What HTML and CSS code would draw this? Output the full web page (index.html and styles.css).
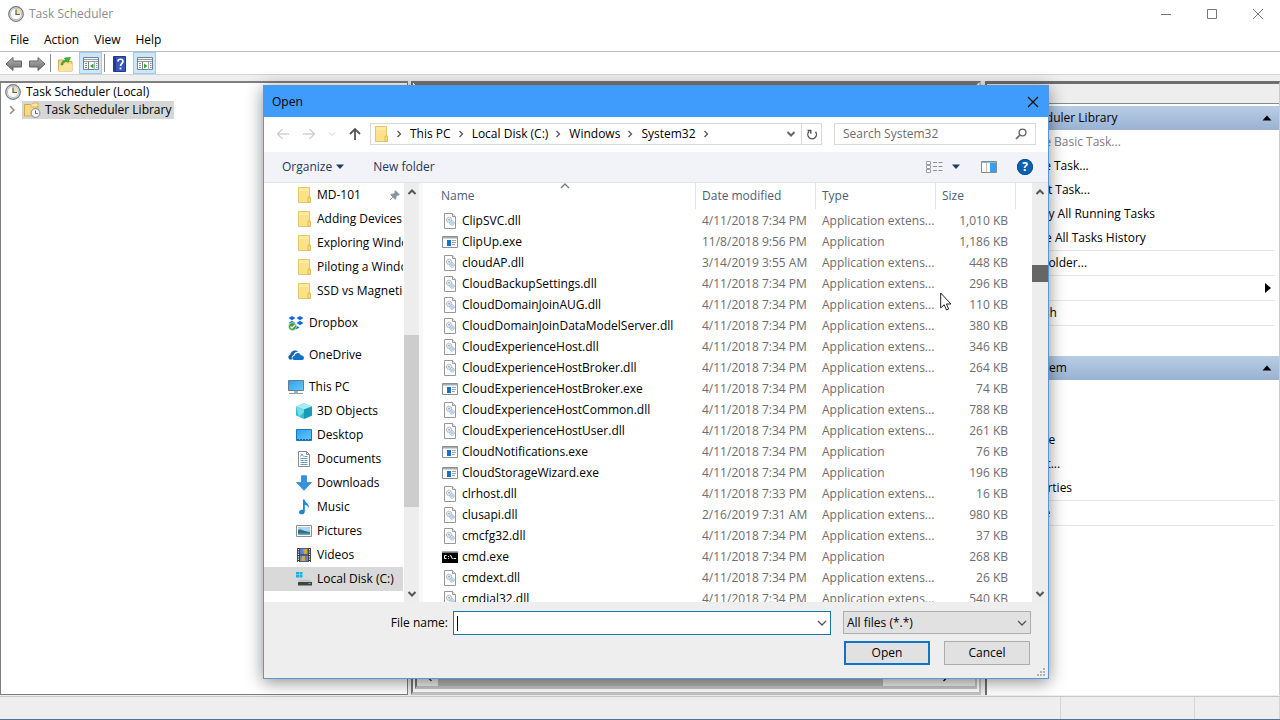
FILE: index.html
```html
<!DOCTYPE html>
<html lang="en">
<head>
<meta charset="utf-8">
<title>Task Scheduler</title>
<link rel="stylesheet" href="styles.css">
</head>
<body>
<svg class="defs" aria-hidden="true">
  <defs>
    <linearGradient id="g-blue" x1="0" y1="0" x2="1" y2="1"><stop offset="0" stop-color="#27a2ef"/><stop offset="1" stop-color="#6cc6f8"/></linearGradient>
    <linearGradient id="g-arrow" x1="0" y1="0" x2="0" y2="1"><stop offset="0" stop-color="#b4b4b4"/><stop offset="1" stop-color="#6c6c6c"/></linearGradient>
  </defs>
  <symbol id="clock" viewBox="0 0 16 16"><circle cx="8" cy="8" r="7.3" fill="#dfe5ec" stroke="#74787e" stroke-width="1.2"/><circle cx="8" cy="8" r="5.6" fill="#fbfbf4" stroke="#a9b4c0" stroke-width=".8"/><path d="M8 8V2.8A5.2 5.2 0 0 1 13.2 8z" fill="#f3dfa0"/><path d="M8 3.5V8.5H12" fill="none" stroke="#555d68" stroke-width="1.2"/></symbol>
  <symbol id="folder" viewBox="0 0 16 16"><path d="M2.500.5h11v15h-11z" fill="#fde28b" stroke="#e5c566"/><path d="M3 1h10v3H3z" fill="#ffea9f"/><path d="M12 15.500V10h2.500v5.500z" fill="#f9dc7c" stroke="#d9b347" stroke-width=".8"/></symbol>
  <symbol id="taskfolder" viewBox="0 0 18 16"><path d="M1.500 14V2.500h6l1.500 2h6V14z" fill="#f5d982" stroke="#d2a94a"/><path d="M9 2.500l1-1.500h5v4H8" fill="#f9e7ab" stroke="#d2a94a" stroke-width=".8"/><circle cx="12.500" cy="11" r="4.400" fill="#f4f7fa" stroke="#7c8793"/><path d="M12.500 8.500V11.500h2.300" fill="none" stroke="#56616d"/></symbol>
  <symbol id="larrow" viewBox="0 0 18 16"><path d="M1 8l7-6.500V5h8.500v6H8v3.500z" fill="url(#g-arrow)" stroke="#646464"/></symbol>
  <symbol id="upfolder" viewBox="0 0 16 16"><path d="M1.500 15V4h5l1 1.500H15V15z" fill="#f5d980" stroke="#d3ac50"/><path d="M1.500 15l1-7H15v7z" fill="#fbe59b"/><path d="M4 9c.5-3 2-4.500 4.500-4.700L7.500 2l6-.5-2.500 5-1-1.200C7.500 5.500 6 7 5.800 9z" fill="#41b336" stroke="#268a22" stroke-width=".6"/></symbol>
  <symbol id="panel" viewBox="0 0 16 14"><path d="M.5.5h15v12H.5z" fill="#fff" stroke="#74808c"/><path d="M1 2.500h14M1 4.500h14" stroke="#8d98a3" stroke-width="1"/><path d="M5.500 5v8" stroke="#74808c"/><path d="M2 6.500h2M2 8.500h2M2 10.500h2M13 6.500h1.500M13 8.500h1.500M13 10.500h1.500" stroke="#7e8b98"/><path d="M11.500 5v8" stroke="#a5afb8"/></symbol>
  <symbol id="book" viewBox="0 0 13 16"><path d="M.5.5h12v15H.5z" fill="#3756bb" stroke="#223a86"/><path d="M1 1h2v14H1z" fill="#223c96"/><path d="M5 5.500c0-3 5-3 5 0 0 2-2.500 2-2.500 4.500M7.500 11.500v2" fill="none" stroke="#fff" stroke-width="1.700"/></symbol>
  <symbol id="dll" viewBox="0 0 16 16"><path d="M2.500.5h8l3 3v12h-11z" fill="#fff" stroke="#979797"/><path d="M10.500.5v3h3" fill="#eee" stroke="#979797"/><circle cx="7" cy="6.800" r="2.600" fill="#e4eaf0" stroke="#8b98a6" stroke-dasharray="1 .6"/><circle cx="7" cy="6.800" r=".8" fill="#8293a4"/><circle cx="10" cy="10" r="2.200" fill="#d8ecf8" stroke="#83a8c4" stroke-dasharray="1 .6"/><circle cx="10" cy="10" r=".7" fill="#7ca4c2"/></symbol>
  <symbol id="exe" viewBox="0 0 16 16"><path d="M.5 2.500h15v11H.5z" fill="#fff" stroke="#8a8f94"/><path d="M1 3h14v1.500H1z" fill="#a8abad"/><path d="M5 6h4v6H5z" fill="#1671c8"/><path d="M10 6.500h4M10 8.500h4M10 10.500h3" stroke="#a0a0a0"/></symbol>
  <symbol id="cmd" viewBox="0 0 16 16"><path d="M0 2h16v12H0z" fill="#000"/><path d="M0 2h16v1.700H0z" fill="#a9adb0"/><path d="M4.500 6.500H2.500v3h2M6.500 7v.8M6.500 9v.8M8.500 6l2 4M11.500 9.500h2.500" stroke="#fff" fill="none"/></symbol>
  <symbol id="dropbox" viewBox="0 0 16 16"><path d="M4 1l3.500 2L4 5.200.5 3zM12 1l3.500 2L12 5.200 8.500 3zM4 5.800L7.500 8 4 10.200.5 8zM12 5.800L15.500 8 12 10.200 8.500 8zM8 10.500l3.500 2-3.500 2-3.500-2z" fill="#1467df"/><circle cx="4.500" cy="11.500" r="4" fill="#3f9f3c" stroke="#e8f5e6" stroke-width=".7"/><path d="M2.500 11.500l1.500 1.500 3-3" fill="none" stroke="#fff" stroke-width="1.300"/></symbol>
  <symbol id="onedrive" viewBox="0 0 16 16"><path d="M1.500 12.500C-.3 11-.1 8.300 2.300 7.900 2.500 4 7.500 1.800 10.300 4.800 7.300 4.500 6 6.200 5.700 8 3.600 8.500 3.300 11 4.300 12.500z" fill="#0a64b8"/><path d="M6 13c-2.500-.5-2-3.700.5-4C7 5.300 12 5 12.700 8.300 16.500 8 17 12.800 14 13z" fill="#0f72cb"/></symbol>
  <symbol id="pc" viewBox="0 0 16 16"><path d="M.5 1.500h15v10H.5z" fill="url(#g-blue)" stroke="#6c7b86"/><path d="M6 12h4v2H6z" fill="#a7b5bf"/><path d="M1 14.500h14" stroke="#7fa1b7"/></symbol>
  <symbol id="cube" viewBox="0 0 16 16"><path d="M0 3.500L8 .2l8 3.300v9L8 16l-8-3.500z" fill="#37bdd2"/><path d="M0 3.500L8 .2l8 3.300-8 3z" fill="#a9ebf1"/><path d="M8 6.500l8-3v9L8 16z" fill="#159db8"/><path d="M0 3.500l8 3V9L3 14z" fill="#78dbe6"/></symbol>
  <symbol id="desktop" viewBox="0 0 16 16"><path d="M.5 2.500h15v11H.5z" fill="url(#g-blue)" stroke="#1b76bd"/><path d="M1 12.500h14" stroke="#1263a3" stroke-dasharray="2 1"/></symbol>
  <symbol id="docs" viewBox="0 0 16 16"><path d="M2.500.5h8l3 3v12h-11z" fill="#fff" stroke="#8c8c8c"/><path d="M10.500.5v3h3" fill="none" stroke="#8c8c8c"/><path d="M4.500 5.500L6 3l1.500 2.500M8.500 5.500h3M4.500 7.500h7M4.500 9.500h3M8.500 9.500h3M4.500 11.500h7M4.500 13.500h7" fill="none" stroke="#5f9cc4"/></symbol>
  <symbol id="down" viewBox="0 0 16 16"><path d="M5.500.7h5V7.500h5L8 15.300.500 7.500h5z" fill="#3291e0" stroke="#2b7cc2" stroke-width=".7"/></symbol>
  <symbol id="music" viewBox="0 0 16 16"><path d="M7 .5h1.500c.5 3.500 5.500 4 4 8.800C12 7 10.500 6 8.800 5.700V12.500c0 3.500-5.800 3.800-5.800.8 0-2.200 2.300-3 4-2.500z" fill="#168bd8"/></symbol>
  <symbol id="pics" viewBox="0 0 16 16"><path d="M.5 2.500h15v11H.5z" fill="#fff" stroke="#8e8e8e"/><path d="M2 4h12v8H2z" fill="#a6d7f4"/><path d="M2 7c3-1.500 5 1.500 12 2v3H2z" fill="#386f83"/><path d="M2 10.500h12V12H2z" fill="#5fa8cb"/></symbol>
  <symbol id="video" viewBox="0 0 16 16"><path d="M1 1h14v14H1z" fill="#3d3d3d"/><path d="M4 1.500h8v6H4z" fill="#4f82d4"/><path d="M4 8.500h8v6H4z" fill="#5785ca"/><path d="M7 2h4v5H8zM6 9h3v5H5z" fill="#d6a43e"/><path d="M2.500 2v13M13.500 2v13" stroke="#fff" stroke-width="1.200" stroke-dasharray="1.200 1.200"/></symbol>
  <symbol id="disk" viewBox="0 0 16 16"><path d="M0 1h3v2.500H0zM3.500 1h3v2.500h-3zM0 4h3v2.500H0zM3.500 4h3v2.500h-3z" fill="#16b0e8"/><path d="M3 8.500h11l1.500 2.500h-13z" fill="#c3c6c8"/><path d="M2 11h14v3.500H2z" fill="#3e4346"/><path d="M12.500 12.500h2" stroke="#3bdc57"/></symbol>
  <symbol id="pin" viewBox="0 0 12 12"><path d="M7 .8L11.200 5l-1 .6-.8-.2L7.500 7.300l.1 2-.9.8L1.900 5.300l.8-.9 2 .1 1.900-1.900-.2-.8zM4.200 7.800L1 11" fill="#8795a3" stroke="#8795a3"/></symbol>
  <symbol id="chev-r" viewBox="0 0 8 8"><path d="M2.500 1L5.500 4l-3 3" fill="none" stroke="currentColor" stroke-width="1.300"/></symbol>
  <symbol id="chev-d" viewBox="0 0 10 8"><path d="M1 2l4 4 4-4" fill="none" stroke="currentColor" stroke-width="1.300"/></symbol>
  <symbol id="chev-u" viewBox="0 0 10 8"><path d="M1 6l4-4 4 4" fill="none" stroke="currentColor" stroke-width="1.300"/></symbol>
  <symbol id="bar-d" viewBox="0 0 10 8"><path d="M1.500 2L5 5.500 8.500 2" fill="none" stroke="currentColor" stroke-width="2"/></symbol>
  <symbol id="bar-u" viewBox="0 0 10 8"><path d="M1.500 6L5 2.500 8.500 6" fill="none" stroke="currentColor" stroke-width="2"/></symbol>
  <symbol id="tri-u" viewBox="0 0 10 6"><path d="M5 .5L9.500 5.500h-9z" fill="#000"/></symbol>
  <symbol id="tri-d" viewBox="0 0 10 6"><path d="M1 .5h8L5 5z" fill="#1d3b5e"/></symbol>
  <symbol id="nav-l" viewBox="0 0 14 12"><path d="M6.500 1L1.500 6l5 5M1.500 6h11.500" fill="none" stroke="currentColor" stroke-width="1.300"/></symbol>
</svg>

<header class="titlebar">
  <svg class="i16"><use href="#clock"/></svg>
  <h1>Task Scheduler</h1>
  <button aria-label="Minimize"><svg width="12" height="12"><path d="M1 6.500h10" stroke="#777"/></svg></button>
  <button aria-label="Maximize"><svg width="12" height="12"><path d="M1.500 1.500h9v9h-9z" fill="none" stroke="#777"/></svg></button>
  <button aria-label="Close"><svg width="12" height="12"><path d="M1 1l10 10M11 1L1 11" stroke="#777"/></svg></button>
</header>
<nav class="menubar"><button>File</button><button>Action</button><button>View</button><button>Help</button></nav>
<div class="toolbar">
  <button aria-label="Back"><svg width="18" height="16"><use href="#larrow"/></svg></button>
  <button aria-label="Forward"><svg class="flip" width="18" height="16"><use href="#larrow"/></svg></button>
  <i class="sep"></i>
  <button class="wide" aria-label="Up one level"><svg class="i16"><use href="#upfolder"/></svg></button>
  <button class="on" aria-label="Show console tree"><svg width="16" height="14"><use href="#panel"/><path d="M10.500 6.500v5l-3.500-2.500z" fill="#35a635"/></svg></button>
  <i class="sep"></i>
  <button class="wide" aria-label="Help"><svg width="13" height="16"><use href="#book"/></svg></button>
  <button class="on" aria-label="Show action pane"><svg width="16" height="14"><use href="#panel"/><path d="M7 6.500v5l3.500-2.500z" fill="#35a635"/></svg></button>
</div>

<main class="panes">
  <section class="tree">
    <div class="node"><svg class="i16"><use href="#clock"/></svg><span>Task Scheduler (Local)</span></div>
    <div class="node child"><svg class="expand" width="10" height="10"><use href="#chev-r"/></svg><span class="picked"><svg width="18" height="16"><use href="#taskfolder"/></svg>Task Scheduler Library</span></div>
  </section>
  <section class="center">
    <div class="hscroll"><svg width="8" height="8"><path d="M5.500 1l-3 3 3 3" fill="none" stroke="#444" stroke-width="1.500"/></svg><i></i><svg width="8" height="8"><use href="#chev-r"/></svg></div>
  </section>
  <aside class="actions">
    <h2>Actions</h2>
    <h3>Task Scheduler Library<svg width="10" height="6"><use href="#tri-u"/></svg></h3>
    <ul>
      <li class="dim">Create Basic Task...</li><li>Create Task...</li><li>Import Task...</li><li>Display All Running Tasks</li><li class="last">Enable All Tasks History</li>
      <li class="last">New Folder...</li><li class="last">View<svg width="6" height="10"><path d="M0 0l6 5-6 5z"/></svg></li><li class="last">Refresh</li><li>Help</li>
    </ul>
    <h3>Selected Item<svg width="10" height="6"><use href="#tri-u"/></svg></h3>
    <ul>
      <li>Run</li><li>End</li><li>Disable</li><li>Export...</li><li class="last">Properties</li><li class="last">Delete</li><li>Help</li>
    </ul>
  </aside>
</main>
<footer class="status"><i></i><i></i><i></i></footer>

<div class="dialog" role="dialog" aria-label="Open">
  <header class="dlg-title"><h2>Open</h2><button aria-label="Close dialog"><svg width="12" height="12"><path d="M1 1l10 10M11 1L1 11" stroke="#111" stroke-width="1.200"/></svg></button></header>
  <div class="dlg-nav">
    <div class="history">
      <button aria-label="Back" class="off"><svg width="14" height="12"><use href="#nav-l"/></svg></button>
      <button aria-label="Forward" class="off"><svg class="flip" width="14" height="12"><use href="#nav-l"/></svg></button>
      <button aria-label="Recent locations" class="off"><svg width="8" height="6"><use href="#chev-d"/></svg></button>
      <button aria-label="Up"><svg width="14" height="14"><path d="M7 13V2M2 7l5-5 5 5" fill="none" stroke="#555" stroke-width="1.800"/></svg></button>
    </div>
    <div class="address">
      <svg class="i16"><use href="#folder"/></svg>
      <svg class="crumb"><use href="#chev-r"/></svg><a href="#">This PC</a>
      <svg class="crumb"><use href="#chev-r"/></svg><a href="#">Local Disk (C:)</a>
      <svg class="crumb"><use href="#chev-r"/></svg><a href="#">Windows</a>
      <svg class="crumb"><use href="#chev-r"/></svg><a href="#">System32</a>
      <svg class="crumb"><use href="#chev-r"/></svg>
      <button class="drop" aria-label="Previous locations"><svg width="10" height="8"><use href="#bar-d"/></svg></button>
      <button class="refresh" aria-label="Refresh"><svg width="12" height="12"><path d="M3 3.500A4.300 4.300 0 1 0 9.500 3.800M1.500 2.500h3.300v3.300" fill="none" stroke="#555" stroke-width="1.400"/></svg></button>
    </div>
    <div class="search"><input type="search" placeholder="Search System32" aria-label="Search System32"><svg width="12" height="12"><circle cx="7.500" cy="4.500" r="3.400" fill="none" stroke="#666" stroke-width="1.400"/><path d="M5 7L1 11" stroke="#666" stroke-width="1.700"/></svg></div>
  </div>
  <div class="dlg-tools">
    <button>Organize<svg width="10" height="6"><use href="#tri-d"/></svg></button>
    <button class="new">New folder</button>
    <span class="grow"></span>
    <button aria-label="Change view"><svg width="17" height="14"><path d="M.5 1.500h4v3h-4zM.5 5.500h4v3h-4zM.5 9.500h4v3h-4z" fill="#fff" stroke="#9aa0a6"/><path d="M7 2.500h4M12.500 2.500h4M7 6.500h4M12.500 6.500h4M7 10.500h4M12.500 10.500h4" stroke="#8a9097"/></svg></button>
    <button class="more" aria-label="More view options"><svg width="10" height="6"><use href="#tri-d"/></svg></button>
    <button aria-label="Preview pane"><svg width="16" height="12"><path d="M.5.5h15v11H.5z" fill="#fff" stroke="#7f8d98"/><path d="M1 1.500h14" stroke="#a7b0b8"/><path d="M9 2h6v9H9z" fill="#3a9ded"/><path d="M5.500 2v9" stroke="#b9c0c6"/></svg></button>
    <button class="q" aria-label="Get help">?</button>
  </div>
  <div class="dlg-body">
    <nav class="places">
      <ul class="list">
        <li class="sub"><svg class="i16"><use href="#folder"/></svg><span>MD-101</span><svg class="pin"><use href="#pin"/></svg></li>
        <li class="sub"><svg class="i16"><use href="#folder"/></svg><span>Adding Devices to</span></li>
        <li class="sub"><svg class="i16"><use href="#folder"/></svg><span>Exploring Windows</span></li>
        <li class="sub"><svg class="i16"><use href="#folder"/></svg><span>Piloting a Windows</span></li>
        <li class="sub"><svg class="i16"><use href="#folder"/></svg><span>SSD vs Magnetic</span></li>
        <li class="top"><svg class="i16"><use href="#dropbox"/></svg><span>Dropbox</span></li>
        <li class="top"><svg class="i16"><use href="#onedrive"/></svg><span>OneDrive</span></li>
        <li class="top"><svg class="i16"><use href="#pc"/></svg><span>This PC</span></li>
        <li class="sub"><svg class="i16"><use href="#cube"/></svg><span>3D Objects</span></li>
        <li class="sub"><svg class="i16"><use href="#desktop"/></svg><span>Desktop</span></li>
        <li class="sub"><svg class="i16"><use href="#docs"/></svg><span>Documents</span></li>
        <li class="sub"><svg class="i16"><use href="#down"/></svg><span>Downloads</span></li>
        <li class="sub"><svg class="i16"><use href="#music"/></svg><span>Music</span></li>
        <li class="sub"><svg class="i16"><use href="#pics"/></svg><span>Pictures</span></li>
        <li class="sub"><svg class="i16"><use href="#video"/></svg><span>Videos</span></li>
        <li class="sub current"><svg class="i16"><use href="#disk"/></svg><span>Local Disk (C:)</span></li>
      </ul>
      <div class="vscroll"><svg><use href="#bar-u"/></svg><div class="track near"><i></i></div><svg><use href="#bar-d"/></svg></div>
    </nav>
    <div class="files">
      <table>
        <thead><tr><th>Name<svg class="sort" width="10" height="8"><use href="#chev-u"/></svg></th><th>Date modified</th><th>Type</th><th>Size</th></tr></thead>
        <tbody>
          <tr><td><svg class="i16"><use href="#dll"/></svg>ClipSVC.dll</td><td>4/11/2018 7:34 PM</td><td>Application extens...</td><td>1,010 KB</td></tr>
          <tr><td><svg class="i16"><use href="#exe"/></svg>ClipUp.exe</td><td>11/8/2018 9:56 PM</td><td>Application</td><td>1,186 KB</td></tr>
          <tr><td><svg class="i16"><use href="#dll"/></svg>cloudAP.dll</td><td>3/14/2019 3:55 AM</td><td>Application extens...</td><td>448 KB</td></tr>
          <tr><td><svg class="i16"><use href="#dll"/></svg>CloudBackupSettings.dll</td><td>4/11/2018 7:34 PM</td><td>Application extens...</td><td>296 KB</td></tr>
          <tr><td><svg class="i16"><use href="#dll"/></svg>CloudDomainJoinAUG.dll</td><td>4/11/2018 7:34 PM</td><td>Application extens...</td><td>110 KB</td></tr>
          <tr><td><svg class="i16"><use href="#dll"/></svg>CloudDomainJoinDataModelServer.dll</td><td>4/11/2018 7:34 PM</td><td>Application extens...</td><td>380 KB</td></tr>
          <tr><td><svg class="i16"><use href="#dll"/></svg>CloudExperienceHost.dll</td><td>4/11/2018 7:34 PM</td><td>Application extens...</td><td>346 KB</td></tr>
          <tr><td><svg class="i16"><use href="#dll"/></svg>CloudExperienceHostBroker.dll</td><td>4/11/2018 7:34 PM</td><td>Application extens...</td><td>264 KB</td></tr>
          <tr><td><svg class="i16"><use href="#exe"/></svg>CloudExperienceHostBroker.exe</td><td>4/11/2018 7:34 PM</td><td>Application</td><td>74 KB</td></tr>
          <tr><td><svg class="i16"><use href="#dll"/></svg>CloudExperienceHostCommon.dll</td><td>4/11/2018 7:34 PM</td><td>Application extens...</td><td>788 KB</td></tr>
          <tr><td><svg class="i16"><use href="#dll"/></svg>CloudExperienceHostUser.dll</td><td>4/11/2018 7:34 PM</td><td>Application extens...</td><td>261 KB</td></tr>
          <tr><td><svg class="i16"><use href="#exe"/></svg>CloudNotifications.exe</td><td>4/11/2018 7:34 PM</td><td>Application</td><td>76 KB</td></tr>
          <tr><td><svg class="i16"><use href="#exe"/></svg>CloudStorageWizard.exe</td><td>4/11/2018 7:34 PM</td><td>Application</td><td>196 KB</td></tr>
          <tr><td><svg class="i16"><use href="#dll"/></svg>clrhost.dll</td><td>4/11/2018 7:33 PM</td><td>Application extens...</td><td>16 KB</td></tr>
          <tr><td><svg class="i16"><use href="#dll"/></svg>clusapi.dll</td><td>2/16/2019 7:31 AM</td><td>Application extens...</td><td>980 KB</td></tr>
          <tr><td><svg class="i16"><use href="#dll"/></svg>cmcfg32.dll</td><td>4/11/2018 7:34 PM</td><td>Application extens...</td><td>37 KB</td></tr>
          <tr><td><svg class="i16"><use href="#cmd"/></svg>cmd.exe</td><td>4/11/2018 7:34 PM</td><td>Application</td><td>268 KB</td></tr>
          <tr><td><svg class="i16"><use href="#dll"/></svg>cmdext.dll</td><td>4/11/2018 7:34 PM</td><td>Application extens...</td><td>26 KB</td></tr>
          <tr><td><svg class="i16"><use href="#dll"/></svg>cmdial32.dll</td><td>4/11/2018 7:34 PM</td><td>Application extens...</td><td>540 KB</td></tr>
        </tbody>
      </table>
    </div>
    <div class="vscroll"><svg><use href="#bar-u"/></svg><div class="track far"><i></i></div><svg><use href="#bar-d"/></svg></div>
  </div>
  <footer class="dlg-foot">
    <label for="fname">File name:</label>
    <div class="combo"><i class="caret"></i><input id="fname" type="text"><svg width="10" height="8"><use href="#chev-d"/></svg></div>
    <div class="filter"><select aria-label="File type"><option>All files (*.*)</option></select><svg width="10" height="8"><use href="#chev-d"/></svg></div>
    <div class="buttons"><button class="primary">Open</button><button>Cancel</button></div>
    <svg class="grip" width="8" height="8"><path d="M6 0h2v2H6zM3 3h2v2H3zM6 3h2v2H6zM0 6h2v2H0zM3 6h2v2H3zM6 6h2v2H6z" fill="#b5b5b5"/></svg>
  </footer>
</div>
<svg class="cursor" width="12" height="19"><path d="M.7 1v15l3.500-3.300L6.500 18l2.200-1L6.400 12H11z" fill="#fff" stroke="#222"/></svg>
</body>
</html>
```
FILE: styles.css
```css
* { box-sizing: border-box; }
body { margin: 0; height: 100vh; display: flex; flex-direction: column; position: relative; overflow: hidden; background: #eee; color: #000; font: 12px/16px "Open Sans", "Noto Sans", sans-serif; }
button, input, select { font: inherit; color: inherit; margin: 0; padding: 0; border: 0; background: none; }
h1, h2, h3 { margin: 0; font: inherit; }
ul { margin: 0; padding: 0; list-style: none; }
a { color: inherit; text-decoration: none; }
svg { flex: none; display: block; }
.defs { position: absolute; width: 0; height: 0; }
.i16 { width: 16px; height: 16px; }
.flip { transform: scaleX(-1); }

.titlebar { display: flex; align-items: center; height: 28px; padding-left: 8px; background: #fff; color: #8c8c8c; }
.titlebar h1 { flex: 1; margin-left: 5px; }
.titlebar button { width: 46px; height: 28px; padding-left: 2px; display: grid; place-items: center; }
.menubar { display: flex; gap: 15px; height: 24px; padding-left: 10px; background: #fff; border-bottom: 1px solid #bdbdbd; }
.toolbar { display: flex; align-items: center; height: 23px; padding-left: 2px; background: #fff; border-bottom: 1px solid #d4d4d4; }
.toolbar button { width: 23px; height: 22px; padding-top: 2px; display: grid; place-items: center; }
.toolbar .wide { width: 28px; }
.toolbar .on { background: #cde6f9; border: 1px solid #9ccdf0; }
.toolbar .sep { width: 1px; height: 18px; margin: 0 0 0 2px; background: #8c8c8c; }

.panes { flex: 1; min-height: 0; display: grid; grid-template-columns: 408px minmax(0, 1fr) 295px; gap: 4px; padding-top: 6px; }
.tree { background: #fff; border: solid #7f7f7f; border-width: 2px 1px 1px; padding: 0 0 0 4px; margin-bottom: 1px; }
.node { display: flex; align-items: center; gap: 5px; height: 18px; }
.expand { color: #8c8c8c; }
.child { padding-left: 2px; gap: 5px; }
.picked { display: flex; align-items: center; gap: 4px; height: 18px; padding: 0 3px 0 1px; background: #d6d6d6; }
.center { display: flex; align-items: flex-end; margin: 0 0 1px -1px; border: solid #777; border-width: 5px 6px 9px; border-bottom-style: double; border-left-style: double; border-right-style: double; border-bottom-color: #c5c5c5; border-right-color: #c5c5c5; background: #fff; }
.hscroll { flex: 1; display: flex; align-items: center; gap: 4px; height: 17px; padding: 0 26px 0 9px; background: #eee; }
.hscroll i { width: 85%; height: 17px; margin-right: auto; background: #b5b5b5; }
.actions { background: #fff; border: solid #6e6e6e; border-width: 3px 1px 0 2px; border-right-color: #ccc; margin-bottom: 1px; overflow: hidden; }
.actions h2 { height: 20px; padding-left: 6px; line-height: 18px; background: #eee; border-bottom: 1px solid #8a8a8a; margin-bottom: 2px; }
.actions h3 { display: flex; align-items: center; justify-content: space-between; height: 24px; padding: 0 7px 0 4px; background: linear-gradient(#b7cde6, #9ab2d2); }
.actions ul { margin: 0 4px 0 0; }
.actions li { display: flex; align-items: center; justify-content: space-between; height: 24px; padding: 0 4px 0 27px; }
.actions li.last { height: 25px; border-bottom: 1px solid #e6e6e6; }
.actions li.dim { color: #7d7d7d; }
.actions ul + h3 { margin-top: 6px; }
.status { display: flex; justify-content: flex-end; height: 24px; border-top: 1px solid #c9c9c9; border-bottom: 1px solid #4f6f9e; }
.status i { width: 85px; border-left: 1px solid #d5d5d5; }
.status i:first-child { width: 134px; }
.status i:last-child { width: 1px; }

.dialog { position: absolute; left: 263px; top: 85px; width: 786px; height: 594px; display: flex; flex-direction: column; background: #fff; border: 1px solid #5a95d6; box-shadow: 0 3px 16px rgba(0, 0, 0, .45); }
.dlg-title { display: flex; align-items: center; justify-content: space-between; height: 31px; padding: 0 9px 0 8px; background: #409cfc; }
.dlg-nav { display: flex; align-items: center; height: 35px; padding: 0 12px 2px 12px; }
.history { display: flex; width: 94px; align-items: center; gap: 12px; color: #555; }
.history .off { color: #cfcfcf; }
.address { flex: 1; display: flex; align-items: center; height: 22px; border: 1px solid #d9d9d9; padding-left: 2px; }
.crumb { width: 8px; height: 8px; margin: 0 7px 0 6px; color: #555; }
.address .drop { margin-left: auto; width: 20px; color: #666; display: grid; place-items: center; }
.address .refresh { width: 20px; height: 20px; border-left: 1px solid #d9d9d9; display: grid; place-items: center; }
.search { width: 202px; height: 22px; margin-left: 12px; display: flex; align-items: center; padding: 0 8px; border: 1px solid #d9d9d9; }
.search input { flex: 1; min-width: 0; outline: 0; appearance: none; }
.search input::placeholder { color: #6d6d6d; opacity: 1; }
.dlg-tools { display: flex; align-items: center; gap: 0 20px; height: 31px; padding: 0 15px 0 18px; background: #f1f3f8; border-bottom: 1px solid #e2e4ea; color: #1e395b; }
.dlg-tools button { display: flex; align-items: center; gap: 3px; }
.dlg-tools .new { margin-left: 8px; }
.dlg-tools .more { margin-left: -12px; }
.dlg-tools .grow { flex: 1; }
.dlg-tools .q { width: 16px; height: 16px; justify-content: center; border-radius: 50%; background: #0b62b4; color: #fff; font-weight: 700; outline: 1px solid #0b4f93; outline-offset: -1px; }
.dlg-body { flex: 1; min-height: 0; display: flex; }
.places { width: 159px; display: flex; border-right: 4px solid #f8f8f8; }
.list { width: 139px; overflow: hidden; }
.list li { display: flex; align-items: center; gap: 5px; height: 24px; white-space: nowrap; }
.sub { padding-left: 32px; }
.top { padding-left: 24px; margin-top: 8px; }
.current { background: #d9d9d9; }
.list .pin { width: 11px; height: 11px; margin: 0 3px 0 auto; }
.vscroll { width: 16px; display: flex; flex-direction: column; align-items: center; background: #ededed; color: #555; padding: 5px 0 4px; }
.vscroll svg { width: 10px; height: 8px; }
.track { flex: 1; width: 100%; display: flex; flex-direction: column; }
.track i { display: block; width: 100%; background: #cdcdcd; }
.track::before, .track::after { content: ""; }
.near::before { flex: 139; }
.near i { flex: 172; }
.near::after { flex: 83; }
.far::before { flex: 69; }
.far i { flex: 17; background: #666; }
.far::after { flex: 308; }
.places .vscroll { margin-left: 1px; width: 15px; }
.files { flex: 1; min-width: 0; overflow: hidden; padding-left: 13px; }
table { width: 580px; border-collapse: separate; border-spacing: 0; table-layout: fixed; }
th { width: 120px; height: 26px; padding: 0 6px; text-align: left; font-weight: 400; color: #4c607a; border-right: 1px solid #e3e3e3; position: relative; }
th:first-child { width: 260px; padding-left: 5px; }
th:last-child { width: 80px; }
.sort { position: absolute; left: 124px; top: -1px; color: #777; }
td { height: 21px; padding: 0 6px; line-height: 16px; white-space: nowrap; color: #6d6d6d; }
tbody::before { content: ""; display: block; height: 1px; }
td:first-child { color: #000; padding-left: 6px; }
td:last-child { text-align: right; padding-right: 8px; }
td svg { float: left; margin-right: 4px; }
.dlg-foot { position: relative; display: grid; grid-template-columns: 184px minmax(0, 1fr) 188px; gap: 6px 0; height: 76px; padding: 9px 17px 0 0; background: #eee; align-content: start; }
.dlg-foot label { text-align: right; line-height: 24px; }
.combo { display: flex; align-items: center; height: 24px; margin: 0 12px 0 5px; padding: 0 3px; border: 1px solid #1877a8; background: #fff; color: #555; }
.combo input { flex: 1; min-width: 0; height: 20px; outline: 0; }
.caret { width: 1px; height: 15px; background: #000; }
.filter { display: flex; align-items: center; height: 23px; padding-right: 3px; border: 1px solid #adadad; background: #e1e1e1; color: #555; }
.filter select { flex: 1; appearance: none; padding-left: 3px; color: #000; outline: 0; }
.buttons { grid-column: 1 / -1; display: flex; justify-content: flex-end; gap: 14px; padding-right: 1px; }
.buttons button { width: 86px; height: 24px; background: #e1e1e1; border: 1px solid #adadad; }
.buttons .primary { border: 2px solid #0f74c8; }
.grip { position: absolute; right: 3px; bottom: 2px; }
.cursor { position: absolute; left: 940px; top: 292px; }
```
